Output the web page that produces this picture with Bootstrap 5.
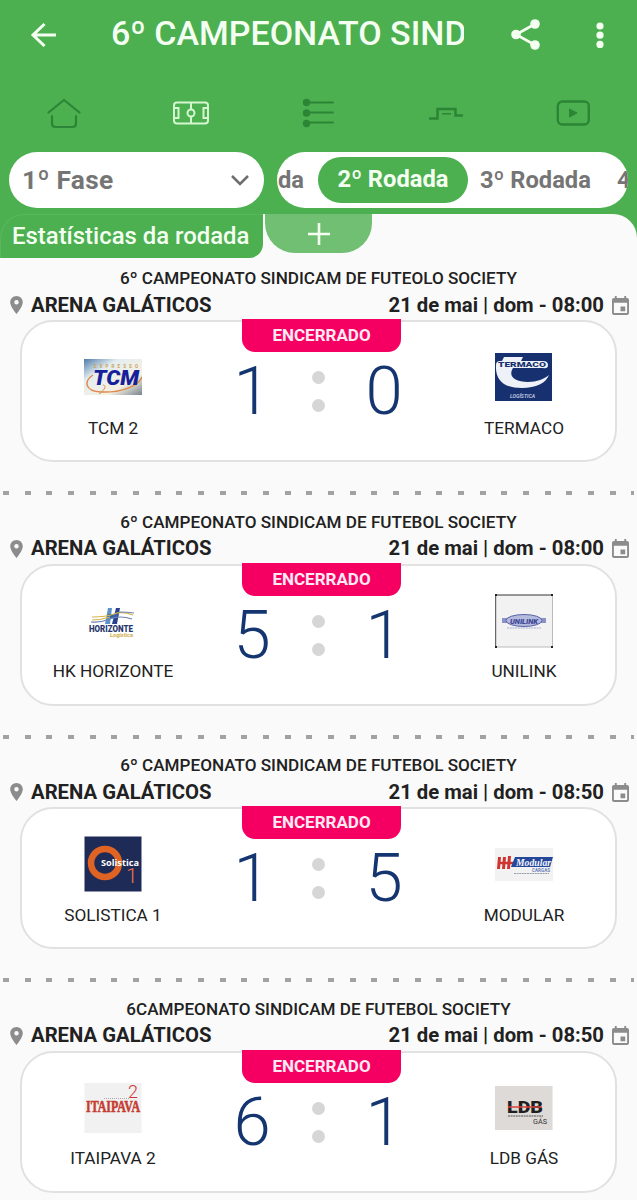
<!DOCTYPE html>
<html lang="pt-BR">
<head>
<meta charset="utf-8">
<meta name="viewport" content="width=device-width, initial-scale=1">
<title>6º Campeonato Sindicam</title>
<link href="https://cdn.jsdelivr.net/npm/bootstrap@5.3.0/dist/css/bootstrap.min.css" rel="stylesheet">
<style>
:root{--verde:#4caf50;--verde-escuro:#2b8535;--fundo:#fafafa}
html,body{height:1200px;overflow:hidden}
body{font-family:Roboto,"Liberation Sans",sans-serif;background:var(--fundo);color:#212121}
svg{display:block;flex:none}
.topo{background:var(--verde)}
.app-bar{height:69px;padding:0 18px 0 29px}
.app-title{width:353px;margin-left:52px;margin-right:43px;font-size:34px;font-weight:500;line-height:64px;height:68px;color:#f4fff2;overflow:hidden;white-space:nowrap}
.tabs-row{height:83px;padding-top:5px;color:var(--verde-escuro)}
.filtros{height:62px;padding:0 9px;gap:13px}
.fase{width:255px;height:56px;padding:0 14px 0 13px;border-radius:28px;font-size:26.3px;letter-spacing:.3px;font-weight:700;color:#757575;line-height:54px}
.rodadas{width:351px;height:56px;border-radius:28px;font-size:23.7px;font-weight:700;color:#757575;line-height:54px;white-space:nowrap}
.rodadas span{flex:none}
.rodadas .ativa{width:150px;height:46px;line-height:45px;border-radius:23px;background:var(--verde);color:#f4fff2}
.painel{background:var(--fundo);border-top-right-radius:24px}
.abas{height:52px}
.aba-est{height:44px;padding-left:12px;color:#f4fff2;font-size:23.9px;font-weight:500;line-height:44px;white-space:nowrap;border-top-left-radius:24px;box-shadow:inset 1px 1px 0 #58b75b;border-bottom-right-radius:14px}
.aba-canto{background:var(--verde);width:263px;height:44px;border-bottom-right-radius:14px}
.aba-mais{width:107px;height:39px;margin-left:2px;background:#70bf73;border-radius:0 0 30px 30px}
.jogo-nome{height:24px;line-height:24px;font-size:17.13px;font-weight:500;white-space:nowrap}
.jogo-info{height:30px;padding:0 8px 0 10px;font-size:20.3px;font-weight:700;line-height:28px;white-space:nowrap}
.jogo-info span{padding-bottom:1px}
.placar{height:142px;width:597px;margin-left:20px;border:2px solid #e1e1e1;border-radius:33px;background:#fff}
.selo{top:-3px;left:220px;width:159px;height:33px;background:#f50062;border-radius:0 0 13px 13px;color:#ffeaf4;font-size:17px;font-weight:700;line-height:32px}
.time{width:182px;padding-top:26px;font-size:17.2px;white-space:nowrap}
.time div{line-height:24px;margin-top:9.5px}
.gols{width:58px;padding-top:19px;font-size:67px;font-weight:300;line-height:100px;color:#14356f}
.gols.casa{margin-left:19px}
.pontos{width:74px;padding-top:49px;gap:15px}
.pontos i{width:13px;height:13px;border-radius:50%;background:#d6d6d6}
.tracos{height:4px;width:631px;margin:29px 3px 14.6px;background:repeating-linear-gradient(90deg,#a2a2a2 0 6px,transparent 6px 21.67px)}
</style>
</head>
<body>
<svg width="0" height="0" class="position-absolute">
  <symbol id="pin" viewBox="5 2 14 20"><path fill="#8c8c8c" d="M12 2C8.1 2 5 5.100 5 9c0 5.250 7 13 7 13s7-7.750 7-13c0-3.900-3.100-7-7-7zm0 9.500a2.500 2.500 0 1 1 0-5 2.500 2.500 0 0 1 0 5z"/></symbol>
  <symbol id="cal" viewBox="3 1 18 20"><path fill="#8c8c8c" d="M17 12h-5v5h5v-5zM16 1v2H8V1H6v2H5c-1.100 0-2 .9-2 2v14c0 1.100.9 2 2 2h14c1.100 0 2-.9 2-2V5c0-1.100-.9-2-2-2h-1V1h-2zm3 18H5V8h14v11z"/></symbol>
</svg>

<header class="topo">
  <div class="app-bar d-flex align-items-center">
    <svg width="30" height="30" viewBox="0 0 30 30" fill="none" stroke="#f4fff2" stroke-width="3"><path d="M27 15H4M15.500 4L4 15l11.500 11"/></svg>
    <div class="app-title">6º CAMPEONATO SINDICAM</div>
    <svg width="36" height="36" viewBox="0 0 36 36" fill="#f4fff2"><path d="M28 7L9 17.500 28 28" fill="none" stroke="#f4fff2" stroke-width="2.600"/><circle cx="28" cy="7" r="4.800"/><circle cx="9" cy="17.500" r="4.800"/><circle cx="28" cy="28" r="4.800"/></svg>
    <svg class="ms-auto" width="38" height="32" viewBox="0 0 38 32" fill="#f4fff2"><circle cx="19" cy="7" r="3.600"/><circle cx="19" cy="16.200" r="3.600"/><circle cx="19" cy="25.400" r="3.600"/></svg>
  </div>
  <nav class="tabs-row row row-cols-5 g-0 align-items-center">
    <div class="col d-flex justify-content-center"><svg width="36" height="34" viewBox="0 0 36 34" fill="none" stroke="currentColor" stroke-width="2.200" stroke-linecap="round" stroke-linejoin="round"><path d="M2.500 16.500L18 4 33.500 16.500M6 20v7.500q0 3.500 3.500 3.500h17q3.500 0 3.500-3.500v-7.500"/></svg></div>
    <div class="col d-flex justify-content-center"><svg width="36" height="24" viewBox="0 0 36 24" fill="none" stroke="#d3f8cf" stroke-width="2"><rect x="1" y="1.500" width="34" height="21" rx="3"/><path d="M18 2v6M18 16v6M2 7h3.500v10H2M34 7h-3.500v10H34"/><circle cx="18" cy="12" r="3.500"/></svg></div>
    <div class="col d-flex justify-content-center"><svg width="34" height="32" viewBox="0 0 34 32" fill="currentColor"><circle cx="5.500" cy="5.500" r="3.700"/><circle cx="5.500" cy="16" r="3.700"/><circle cx="5.500" cy="26.500" r="3.700"/><path d="M9 5.500h23M9 15.500h23M9 25.500h23" stroke="currentColor" stroke-width="1.800" stroke-linecap="round"/></svg></div>
    <div class="col d-flex justify-content-center"><svg width="36" height="20" viewBox="0 0 36 20" fill="none" stroke="currentColor" stroke-width="2.500"><path d="M1 15.500h8.500v-9.500h18v6.500H35"/><path d="M14 10.800h9" stroke-width="1.500"/></svg></div>
    <div class="col d-flex justify-content-center"><svg width="34" height="28" viewBox="0 0 34 28" fill="none" stroke="currentColor" stroke-width="2.400"><rect x="1.800" y="2.500" width="31" height="23" rx="4.500"/><path fill="currentColor" stroke-width="1" stroke-linejoin="round" d="M13.500 10v8l7.500-4z"/></svg></div>
  </nav>
  <div class="filtros d-flex">
    <div class="fase bg-white d-flex align-items-center justify-content-between"><span>1º Fase</span>
      <svg width="20" height="12" viewBox="0 0 20 12" fill="none" stroke="#6d6d6d" stroke-width="2.500"><path d="M2 2l8 8 8-8"/></svg></div>
    <div class="rodadas bg-white d-flex align-items-center overflow-hidden">
      <span style="margin-left:1px;width:40px">da</span><span class="ativa text-center">2º Rodada</span><span style="margin-left:12px;width:137px">3º Rodada</span><span>4</span>
    </div>
  </div>
  <div class="painel">
    <div class="abas d-flex">
      <div class="aba-canto"><div class="aba-est"><span>Estatísticas da rodada</span></div></div>
      <div class="aba-mais d-flex align-items-center justify-content-center"><svg width="24" height="24" viewBox="0 0 24 24" stroke="#f4fff2" stroke-width="2.600"><path d="M12 1v22M1 12h22"/></svg></div>
    </div>
  </div>
</header>

<main>
  <article>
    <div class="jogo-nome text-center">6º CAMPEONATO SINDICAM DE FUTEOLO SOCIETY</div>
    <div class="jogo-info d-flex align-items-center"><svg width="13" height="18"><use href="#pin"/></svg><span class="ms-2">ARENA GALÁTICOS</span><span class="ms-auto me-2">21 de mai | dom - 08:00</span><svg width="17" height="19"><use href="#cal"/></svg></div>
    <div class="placar position-relative d-flex">
      <div class="selo position-absolute text-center">ENCERRADO</div>
      <div class="time d-flex flex-column align-items-center">
        <svg width="58" height="58" viewBox="0 0 58 58"><defs><linearGradient id="ceu" x2="1" y2="1"><stop stop-color="#4f7ca8"/><stop offset=".3" stop-color="#e4edf0"/><stop offset=".7" stop-color="#f6f1e2"/><stop offset="1" stop-color="#76838f"/></linearGradient></defs><rect y="11" width="58" height="36" fill="url(#ceu)"/><text x="10" y="20" font-size="4.500" font-weight="700" fill="#c9a45c" textLength="44">EXPRESSO</text><path d="M9 27C0 33 0 43 17 44c18 1 37-5 41-15" fill="none" stroke="#df8a50" stroke-width="1.500"/><path d="M15 46c4-3 9-8 4-9" fill="none" stroke="#df8a50"/><text x="9" y="37" font-family="Roboto" font-size="21" font-weight="900" font-style="italic" fill="#16209a" textLength="46" lengthAdjust="spacingAndGlyphs">TCM</text></svg>
        <div>TCM 2</div></div>
      <div class="gols casa text-center">1</div>
      <div class="pontos d-flex flex-column align-items-center"><i></i><i></i></div>
      <div class="gols text-center">0</div>
      <div class="time ms-auto d-flex flex-column align-items-center">
        <svg width="58" height="58" viewBox="0 0 58 58"><rect y="5" width="57" height="48" fill="#17306f"/><path d="M9 9h19l-2 4H7zM1 17q0-4 4-4h43q5 0 5 4t-5 3H18c-5 8 1 14 15 14 9 0 16-3 21-7-3 8-13 13-27 13C10 40 0 33 1 17z" fill="#eef1f8"/><text x="3" y="19.200" font-size="6.500" font-weight="900" fill="#17306f" textLength="48" lengthAdjust="spacingAndGlyphs">TERMACO</text><text x="15" y="50" font-size="5" font-weight="500" font-style="italic" fill="#d7dcec" textLength="25" lengthAdjust="spacingAndGlyphs">LOGÍSTICA</text></svg>
        <div>TERMACO</div></div>
    </div>
    <div class="tracos"></div>
  </article>

  <article>
    <div class="jogo-nome text-center">6º CAMPEONATO SINDICAM DE FUTEBOL SOCIETY</div>
    <div class="jogo-info d-flex align-items-center"><svg width="13" height="18"><use href="#pin"/></svg><span class="ms-2">ARENA GALÁTICOS</span><span class="ms-auto me-2">21 de mai | dom - 08:00</span><svg width="17" height="19"><use href="#cal"/></svg></div>
    <div class="placar position-relative d-flex">
      <div class="selo position-absolute text-center">ENCERRADO</div>
      <div class="time d-flex flex-column align-items-center">
        <svg width="58" height="58" viewBox="0 0 58 58"><path d="M24 16h4l-2 16h-5z" fill="#5d93c9"/><path d="M32 16h4l-3 16h-5z" fill="#27408f"/><path d="M24 22h10l-1 4H23z" fill="#3b64a8"/><path d="M8 25q14 0 22-3t19 1" fill="none" stroke="#d8b64c" stroke-width="1.200"/><path d="M7 30q9 1 19-3t22 0M35 20q9 0 15 1" fill="none" stroke="#6b83b5" stroke-width="1.200"/><path d="M8 28q9 0 18-3" fill="none" stroke="#d8b64c" stroke-width="1.200"/><text x="5" y="39.500" font-size="8.500" font-weight="900" fill="#28366f" textLength="44" lengthAdjust="spacingAndGlyphs">HORIZONTE</text><text x="26" y="45" font-size="5" font-weight="700" fill="#cfae4b" textLength="23" lengthAdjust="spacingAndGlyphs">Logística</text></svg>
        <div>HK HORIZONTE</div></div>
      <div class="gols casa text-center">5</div>
      <div class="pontos d-flex flex-column align-items-center"><i></i><i></i></div>
      <div class="gols text-center">1</div>
      <div class="time ms-auto d-flex flex-column align-items-center">
        <svg width="58" height="58" viewBox="0 0 58 58"><rect x=".5" y="3" width="57" height="52" rx="1" fill="#f2f2f2" stroke="#bbb"/><path d="M.7 55V3H57" fill="none" stroke="#555"/><path d="M0 3h2M56 3h2M0 55h2M56 55h2" stroke="#222" stroke-width="2"/><rect x="7" y="26" width="44" height="5" fill="#8a92c6"/><ellipse cx="29" cy="28.500" rx="18" ry="6" fill="#b5bbdd" stroke="#5863a8"/><text x="15" y="31.500" font-size="8" font-weight="900" font-style="italic" fill="#3d4797" textLength="28" lengthAdjust="spacingAndGlyphs">UNILINK</text><path d="M12 36h34" stroke="#aab1d2" stroke-dasharray="2 .7"/></svg>
        <div>UNILINK</div></div>
    </div>
    <div class="tracos"></div>
  </article>

  <article>
    <div class="jogo-nome text-center">6º CAMPEONATO SINDICAM DE FUTEBOL SOCIETY</div>
    <div class="jogo-info d-flex align-items-center"><svg width="13" height="18"><use href="#pin"/></svg><span class="ms-2">ARENA GALÁTICOS</span><span class="ms-auto me-2">21 de mai | dom - 08:50</span><svg width="17" height="19"><use href="#cal"/></svg></div>
    <div class="placar position-relative d-flex">
      <div class="selo position-absolute text-center">ENCERRADO</div>
      <div class="time d-flex flex-column align-items-center">
        <svg width="58" height="58" viewBox="0 0 58 58"><rect x=".5" y="1.500" width="57" height="55" fill="#1f2b57"/><circle cx="21" cy="28" r="14" fill="none" stroke="#df6323" stroke-width="6.500"/><text x="17" y="31" font-family="Open Sans" font-size="9" font-weight="700" fill="#fff" textLength="38" lengthAdjust="spacingAndGlyphs">Solistica</text><text x="42" y="48" font-size="21" font-weight="300" fill="#f2734a">1</text></svg>
        <div>SOLISTICA 1</div></div>
      <div class="gols casa text-center">1</div>
      <div class="pontos d-flex flex-column align-items-center"><i></i><i></i></div>
      <div class="gols text-center">5</div>
      <div class="time ms-auto d-flex flex-column align-items-center">
        <svg width="58" height="58" viewBox="0 0 58 58"><rect y="13" width="58" height="33" fill="#f2f2f3"/><path d="M3 22h3l-1 12H2zM8 22h3l-1 12H7zM13 21h3l-1 13h-3z" fill="#cf3530"/><path d="M4 28h14" stroke="#cf3530" stroke-width="2.500"/><path d="M20 22h38l-3 10H16z" fill="#24479a"/><text x="21" y="31" font-family="Liberation Serif" font-size="11" font-weight="700" font-style="italic" fill="#f5f7ff" textLength="35" lengthAdjust="spacingAndGlyphs">Modular</text><text x="37" y="36.500" font-size="4.500" font-weight="700" fill="#6882b8" textLength="18">CARGAS</text><path d="M19 38.500h35" stroke="#9aa0ae" stroke-dasharray="2 .6"/></svg>
        <div>MODULAR</div></div>
    </div>
    <div class="tracos"></div>
  </article>

  <article>
    <div class="jogo-nome text-center">6CAMPEONATO SINDICAM DE FUTEBOL SOCIETY</div>
    <div class="jogo-info d-flex align-items-center"><svg width="13" height="18"><use href="#pin"/></svg><span class="ms-2">ARENA GALÁTICOS</span><span class="ms-auto me-2">21 de mai | dom - 08:50</span><svg width="17" height="19"><use href="#cal"/></svg></div>
    <div class="placar position-relative d-flex">
      <div class="selo position-absolute text-center">ENCERRADO</div>
      <div class="time d-flex flex-column align-items-center">
        <svg width="58" height="58" viewBox="0 0 58 58"><rect x=".5" y="4" width="57" height="50" fill="#f1f1f1"/><text x="44" y="19" font-size="18" font-weight="300" fill="#cf3434">2</text><path d="M20 19.500h25" stroke="#aaa" stroke-dasharray="1 1"/><text x="2" y="32.500" font-family="Liberation Serif" font-size="17" font-weight="700" fill="#c63c30" stroke="#c63c30" stroke-width=".6" textLength="54" lengthAdjust="spacingAndGlyphs">ITAIPAVA</text></svg>
        <div>ITAIPAVA 2</div></div>
      <div class="gols casa text-center">6</div>
      <div class="pontos d-flex flex-column align-items-center"><i></i><i></i></div>
      <div class="gols text-center">1</div>
      <div class="time ms-auto d-flex flex-column align-items-center">
        <svg width="58" height="58" viewBox="0 0 58 58"><rect y="7" width="57.500" height="44" fill="#dedad7"/><text x="12" y="34" font-size="16" font-weight="900" fill="#1f1f1f" textLength="36" lengthAdjust="spacingAndGlyphs">LDB</text><path d="M13 28h34" stroke="#d8433d" stroke-width="1.500"/><path d="M13 37h35" stroke="#555" stroke-dasharray="2 .6"/><text x="38" y="45" font-size="7.500" fill="#333" textLength="14" lengthAdjust="spacingAndGlyphs">GÁS</text></svg>
        <div>LDB GÁS</div></div>
    </div>
  </article>
</main>
<script src="https://cdn.jsdelivr.net/npm/bootstrap@5.3.0/dist/js/bootstrap.bundle.min.js"></script>
</body>
</html>
